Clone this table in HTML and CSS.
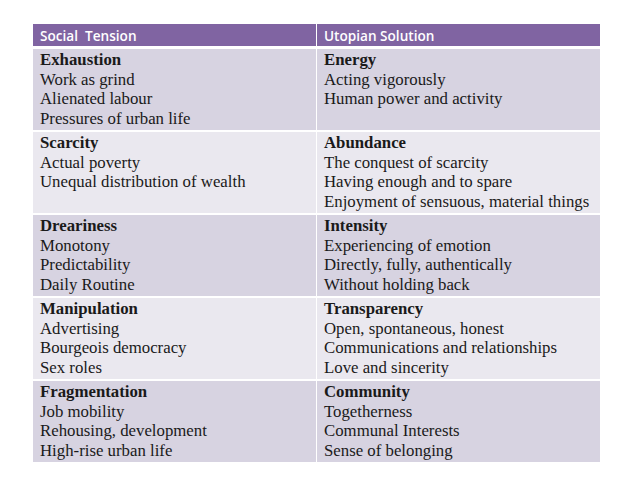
FILE: index.html
```html
<!DOCTYPE html>
<html>
<head>
<meta charset="utf-8">
<link rel="stylesheet" href="styles.css">
</head>
<body>
<div class="table">
  <div class="th">Social&nbsp; Tension</div>
  <div class="th">Utopian Solution</div>

  <div class="td dark"><b>Exhaustion</b><span>Work as grind</span><span>Alienated labour</span><span>Pressures of urban life</span></div>
  <div class="td dark"><b>Energy</b><span>Acting vigorously</span><span>Human power and activity</span></div>

  <div class="td light"><b>Scarcity</b><span>Actual poverty</span><span>Unequal distribution of wealth</span></div>
  <div class="td light"><b>Abundance</b><span>The conquest of scarcity</span><span>Having enough and to spare</span><span>Enjoyment of sensuous, material things</span></div>

  <div class="td dark"><b>Dreariness</b><span>Monotony</span><span>Predictability</span><span>Daily Routine</span></div>
  <div class="td dark"><b>Intensity</b><span>Experiencing of emotion</span><span>Directly, fully, authentically</span><span>Without holding back</span></div>

  <div class="td light"><b>Manipulation</b><span>Advertising</span><span>Bourgeois democracy</span><span>Sex roles</span></div>
  <div class="td light"><b>Transparency</b><span>Open, spontaneous, honest</span><span>Communications and relationships</span><span>Love and sincerity</span></div>

  <div class="td dark"><b>Fragmentation</b><span>Job mobility</span><span>Rehousing, development</span><span>High-rise urban life</span></div>
  <div class="td dark"><b>Community</b><span>Togetherness</span><span>Communal Interests</span><span>Sense of belonging</span></div>
</div>
</body>
</html>
```

FILE: styles.css
```css
html, body {
  margin: 0;
  padding: 0;
  background: #ffffff;
}
body {
  padding: 24px 0 0 33px;
}
.table {
  display: grid;
  grid-template-columns: 283px 283px;
  grid-template-rows: 23px repeat(5, 81px);
  column-gap: 1px;
  row-gap: 2px;
  width: 567px;
  background: #ffffff;
}
.th {
  background: #8064a2;
  color: #ffffff;
  font-family: "Open Sans", "Liberation Sans", sans-serif;
  font-size: 13.6px;
  font-weight: 600;
  padding: 1px 7px 0;
  display: flex;
  align-items: center;
  white-space: nowrap;
}
.table .th:nth-child(1), .table .th:nth-child(2) {
  margin-bottom: 1px;
}
.td {
  font-family: "Liberation Serif", "Times New Roman", serif;
  font-size: 16.8px;
  line-height: 19.5px;
  color: #1a1a1a;
  padding: 1px 7px 0;
  display: flex;
  flex-direction: column;
  white-space: nowrap;
}
.td b {
  font-weight: bold;
}
.dark { background: #d7d3e1; }
.light { background: #eae8ef; }
```
